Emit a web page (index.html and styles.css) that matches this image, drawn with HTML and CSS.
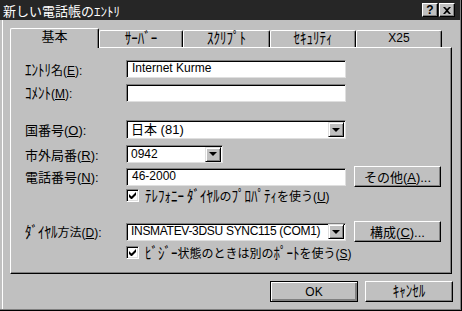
FILE: index.html
```html
<!DOCTYPE html>
<html lang="ja">
<head>
  <meta charset="UTF-8" />
  <title>新しい電話帳のｴﾝﾄﾘ</title>
  <link rel="stylesheet" href="styles.css">
</head>
<body>
  <div class="window">
    <div class="titlebar">
      <span class="title">新しい電話帳のｴﾝﾄﾘ</span>
      <div class="title-btns">
        <span class="tbtn">?</span>
        <span class="tbtn">
          <svg width="8" height="7" viewBox="0 0 8 7"><path d="M0 0h2l2 2 2-2h2L5 3.5 8 7H6L4 5 2 7H0l3-3.5z" fill="#000"/></svg>
        </span>
      </div>
    </div>

    <div class="tabs">
      <div class="tab active">基本</div>
      <div class="tab w84"><span class="hw">ｻｰﾊﾞｰ</span></div>
      <div class="tab w87"><span class="hw">ｽｸﾘﾌﾟﾄ</span></div>
      <div class="tab w86"><span class="hw">ｾｷｭﾘﾃｨ</span></div>
      <div class="tab w86">X25</div>
    </div>

    <div class="panel">
      <div class="row r1">
        <label class="lbl"><span class="hw">ｴﾝﾄﾘ</span>名(<u>E</u>):</label>
        <div class="field wide">Internet Kurme</div>
      </div>
      <div class="row r2">
        <label class="lbl"><span class="hw">ｺﾒﾝﾄ</span>(<u>M</u>):</label>
        <div class="field wide"></div>
      </div>
      <div class="row r3">
        <label class="lbl">国番号(<u>O</u>):</label>
        <div class="combo wide tall"><span class="ctext">日本 (81)</span><span class="drop"><i class="arrow"></i></span></div>
      </div>
      <div class="row r4">
        <label class="lbl">市外局番(<u>R</u>):</label>
        <div class="combo short"><span class="ctext">0942</span><span class="drop"><i class="arrow"></i></span></div>
      </div>
      <div class="row r5">
        <label class="lbl">電話番号(<u>N</u>):</label>
        <div class="field wide">46-2000</div>
        <button class="btn side">その他(<u>A</u>)...</button>
      </div>
      <div class="check c1">
        <span class="box"><svg width="7" height="7" viewBox="0 0 7 7"><path d="M0 2v3l2 2h1l4-4V0L2.5 4.5z" fill="#000"/></svg></span>
        <span><span class="hw">ﾃﾚﾌｫﾆｰ ﾀﾞｲﾔﾙ</span>の<span class="hw">ﾌﾟﾛﾊﾟﾃｨ</span>を使う(<u>U</u>)</span>
      </div>
      <div class="row r6">
        <label class="lbl"><span class="hw">ﾀﾞｲﾔﾙ</span>方法(<u>D</u>):</label>
        <div class="combo wide"><span class="ctext tight">INSMATEV-3DSU SYNC115 (COM1)</span><span class="drop"><i class="arrow"></i></span></div>
        <button class="btn side">構成(<u>C</u>)...</button>
      </div>
      <div class="check c2">
        <span class="box"><svg width="7" height="7" viewBox="0 0 7 7"><path d="M0 2v3l2 2h1l4-4V0L2.5 4.5z" fill="#000"/></svg></span>
        <span><span class="hw">ﾋﾞｼﾞｰ</span>状態のときは別の<span class="hw">ﾎﾟｰﾄ</span>を使う(<u>S</u>)</span>
      </div>
    </div>

    <div class="footer">
      <button class="btn default">OK</button>
      <button class="btn"><span class="hw">ｷｬﾝｾﾙ</span></button>
    </div>
  </div>
</body>
</html>
```

FILE: styles.css
```css
body {
  margin: 0;
  background: #c0c0c0;
  font-family: "Liberation Sans", "Noto Sans CJK JP", sans-serif;
  font-size: 12px;
  color: #000;
}

/* half-width katakana: Noto draws them short, so stretch them upward */
.hw {
  display: inline-block;
  font-family: "Noto Sans CJK JP", sans-serif;
  font-size: 13px;
  line-height: 1;
  transform: scaleY(1.25);
}

.window {
  width: 462px;
  height: 311px;
  box-sizing: border-box;
  background: #c0c0c0;
  border-right: 1px solid #000;
  border-bottom: 1px solid #000;
  box-shadow: inset -1px -1px #808080, inset 2px 0 #c0c0c0, inset 3px 0 #fff;
  display: flex;
  flex-direction: column;
}

.titlebar {
  height: 20px;
  margin-right: 1px;
  background: #262626;
  color: #fff;
  display: flex;
  align-items: center;
  justify-content: space-between;
  padding: 0 5px 0 3px;
}

.title {
  font-family: "Noto Sans CJK JP", sans-serif;
  font-size: 13px;
  white-space: nowrap;
}

.title-btns {
  display: flex;
  gap: 1px;
}

.tbtn {
  width: 16px;
  height: 14px;
  box-sizing: border-box;
  background: #c0c0c0;
  color: #000;
  font-weight: bold;
  font-size: 12px;
  line-height: 12px;
  display: flex;
  align-items: center;
  justify-content: center;
  border-top: 1px solid #fff;
  border-left: 1px solid #fff;
  border-right: 1px solid #000;
  border-bottom: 1px solid #000;
  box-shadow: inset -1px -1px #808080;
}

/* tabs */
.tabs {
  display: flex;
  align-items: flex-end;
  height: 19px;
  margin: 8px 0 0 10px;
}

.tab {
  width: 86px;
  height: 17px;
  box-sizing: border-box;
  border-top: 1px solid #fff;
  border-left: 1px solid #fff;
  border-right: 1px solid #000;
  border-radius: 2px 2px 0 0;
  box-shadow: inset -1px 0 #808080;
  text-align: center;
  line-height: 15px;
}

.tab.w84 { width: 84px; }
.tab.w87 { width: 87px; }
.tab.w86 { width: 86px; }

.tab.active {
  width: 89px;
  height: 20px;
  margin-bottom: -1px;
  background: #c0c0c0;
  position: relative;
  z-index: 1;
  line-height: 16px;
  font-size: 13px;
}

/* main panel */
.panel {
  width: 442px;
  height: 227px;
  box-sizing: border-box;
  margin-left: 10px;
  border-top: 1px solid #fff;
  border-left: 1px solid #fff;
  border-right: 1px solid #000;
  border-bottom: 1px solid #000;
  box-shadow: inset -1px -1px #808080;
  padding-left: 14px;
}

.row {
  display: flex;
  align-items: center;
}

.r1 { margin-top: 12px; height: 18px; }
.r2 { margin-top: 6px; height: 18px; }
.r3 { margin-top: 18px; height: 19px; }
.r4 { margin-top: 6px; height: 18px; }
.r5 { margin-top: 3px; height: 21px; }
.r6 { margin-top: 19px; height: 21px; }

.lbl {
  width: 101px;
  flex: none;
}

.r3 .lbl, .r4 .lbl, .r5 .lbl {
  font-size: 13px;
}

.field, .combo {
  height: 18px;
  box-sizing: border-box;
  background: #fff;
  border-top: 1px solid #808080;
  border-left: 1px solid #808080;
  border-right: 1px solid #dfdfdf;
  border-bottom: 1px solid #dfdfdf;
  box-shadow: inset 1px 1px #000;
  padding-left: 5px;
  line-height: 15px;
  white-space: nowrap;
}

.wide { width: 220px; }
.short { width: 97px; }
.tall { height: 19px; font-size: 13px; }

.combo {
  display: flex;
  align-items: center;
  justify-content: space-between;
  padding: 0 1px 0 4px;
  overflow: hidden;
}

.tight { letter-spacing: -0.3px; }

.drop {
  width: 16px;
  height: 15px;
  box-sizing: border-box;
  flex: none;
  background: #c0c0c0;
  border-top: 1px solid #dfdfdf;
  border-left: 1px solid #dfdfdf;
  border-right: 1px solid #000;
  border-bottom: 1px solid #000;
  box-shadow: inset 1px 1px #fff, inset -1px -1px #808080;
  display: flex;
  align-items: center;
  justify-content: center;
}

.arrow {
  width: 0;
  height: 0;
  border-left: 4px solid transparent;
  border-right: 4px solid transparent;
  border-top: 4px solid #000;
}

.btn {
  width: 87px;
  height: 21px;
  box-sizing: border-box;
  background: #c0c0c0;
  font: inherit;
  color: #000;
  padding: 0;
  border-top: 1px solid #fff;
  border-left: 1px solid #fff;
  border-right: 1px solid #000;
  border-bottom: 1px solid #000;
  box-shadow: inset -1px -1px #808080;
}

.btn.side { margin-left: 8px; font-size: 13px; }

.btn.default {
  border: 1px solid #000;
  box-shadow: inset 1px 1px #fff, inset -2px -2px #808080;
}

.check {
  display: flex;
  align-items: center;
  gap: 6px;
  height: 13px;
  margin-left: 101px;
}

.c1 { margin-top: 2px; }
.c2 { margin-top: 4px; }

.box {
  width: 13px;
  height: 13px;
  box-sizing: border-box;
  background: #fff;
  border-top: 1px solid #808080;
  border-left: 1px solid #808080;
  border-right: 1px solid #fff;
  border-bottom: 1px solid #fff;
  box-shadow: inset 1px 1px #000, inset -1px -1px #dfdfdf;
  display: flex;
  align-items: center;
  justify-content: center;
}

.footer {
  display: flex;
  justify-content: flex-end;
  gap: 7px;
  margin-top: 7px;
  padding-right: 8px;
}

.footer .btn { width: 88px; }
```
